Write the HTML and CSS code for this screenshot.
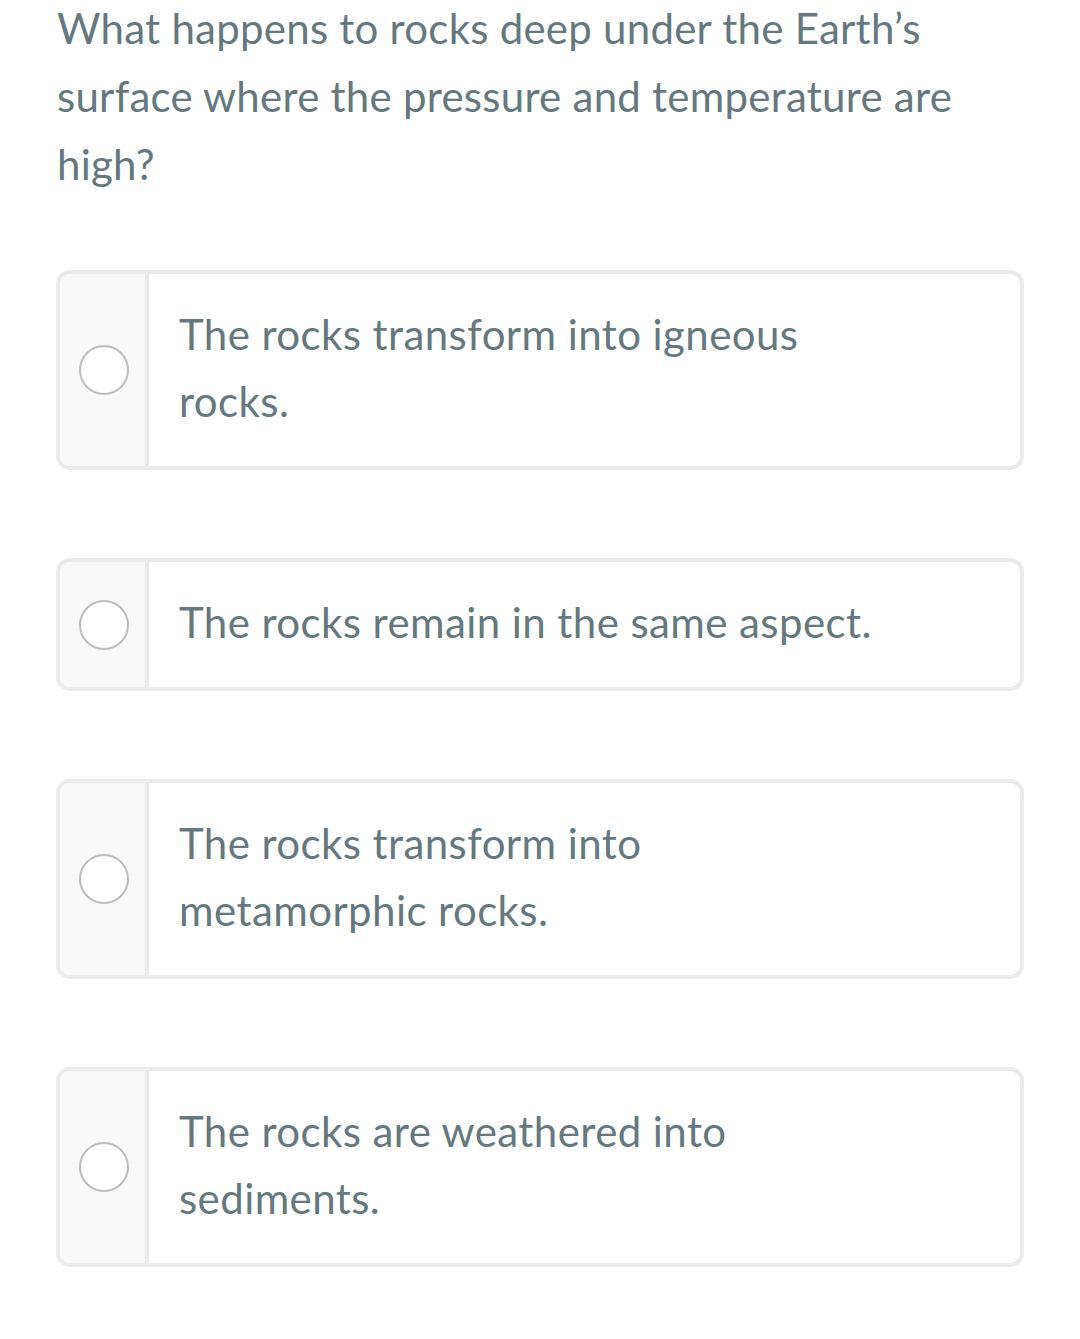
FILE: index.html
```html
<!DOCTYPE html>
<html>
<head>
<meta charset="utf-8">
<link rel="stylesheet" href="styles.css">
</head>
<body>
<div class="page">
  <p class="question">What happens to rocks deep under the Earth’s surface where the pressure and temperature are high?</p>
  <div class="options">
    <div class="option">
      <div class="radio-col"><span class="radio"></span></div>
      <div class="label">The rocks transform into igneous rocks.</div>
    </div>
    <div class="option">
      <div class="radio-col"><span class="radio"></span></div>
      <div class="label">The rocks remain in the same aspect.</div>
    </div>
    <div class="option">
      <div class="radio-col"><span class="radio"></span></div>
      <div class="label">The rocks transform into metamorphic rocks.</div>
    </div>
    <div class="option">
      <div class="radio-col"><span class="radio"></span></div>
      <div class="label">The rocks are weathered into sediments.</div>
    </div>
  </div>
</div>
</body>
</html>
```

FILE: styles.css
```css
html, body {
  margin: 0;
  padding: 0;
  background: #ffffff;
}

.page {
  padding: 0 56px;
  font-family: Lato, "Noto Sans", sans-serif;
  color: #64787e;
}

.question {
  margin: -6px 0 72px 1px;
  font-size: 42px;
  line-height: 68px;
  letter-spacing: 0.25px;
  padding-right: 60px;
}

.options {
  display: flex;
  flex-direction: column;
  gap: 88px;
}

.option {
  display: flex;
  border: 4px solid #ebebeb;
  border-radius: 14px;
  overflow: hidden;
  background: #ffffff;
}

.radio-col {
  width: 85px;
  flex: none;
  background: #f9f9f9;
  border-right: 4px solid #ebebeb;
  display: flex;
  align-items: center;
  justify-content: center;
}

.radio {
  width: 46px;
  height: 46px;
  border: 2px solid #bdbdbd;
  border-radius: 50%;
  background: #ffffff;
  margin-left: 2px;
}

.label {
  flex: 1;
  padding: 27px 136px 31px 30px;
  font-size: 42px;
  line-height: 67px;
  letter-spacing: 0.42px;
}
```
